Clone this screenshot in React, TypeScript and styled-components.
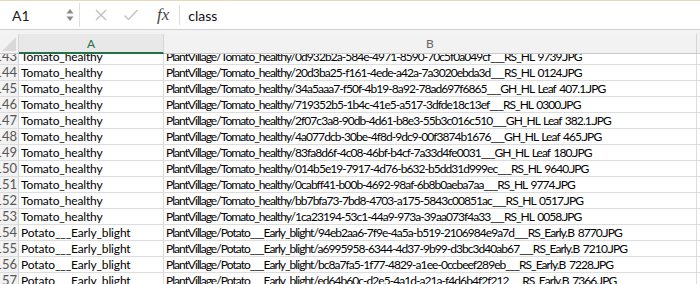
import styled, { createGlobalStyle } from 'styled-components';

const rows: [number, string, string][] = [
  [143, 'Tomato_healthy', 'PlantVillage/Tomato_healthy/0d932b2a-584e-4971-8590-70c5f0a049cf___RS_HL 9739.JPG'],
  [144, 'Tomato_healthy', 'PlantVillage/Tomato_healthy/20d3ba25-f161-4ede-a42a-7a3020ebda3d___RS_HL 0124.JPG'],
  [145, 'Tomato_healthy', 'PlantVillage/Tomato_healthy/34a5aaa7-f50f-4b19-8a92-78ad697f6865___GH_HL Leaf 407.1.JPG'],
  [146, 'Tomato_healthy', 'PlantVillage/Tomato_healthy/719352b5-1b4c-41e5-a517-3dfde18c13ef___RS_HL 0300.JPG'],
  [147, 'Tomato_healthy', 'PlantVillage/Tomato_healthy/2f07c3a8-90db-4d61-b8e3-55b3c016c510___GH_HL Leaf 382.1.JPG'],
  [148, 'Tomato_healthy', 'PlantVillage/Tomato_healthy/4a077dcb-30be-4f8d-9dc9-00f3874b1676___GH_HL Leaf 465.JPG'],
  [149, 'Tomato_healthy', 'PlantVillage/Tomato_healthy/83fa8d6f-4c08-46bf-b4cf-7a33d4fe0031___GH_HL Leaf 180.JPG'],
  [150, 'Tomato_healthy', 'PlantVillage/Tomato_healthy/014b5e19-7917-4d76-b632-b5dd31d999ec___RS_HL 9640.JPG'],
  [151, 'Tomato_healthy', 'PlantVillage/Tomato_healthy/0cabff41-b00b-4692-98af-6b8b0aeba7aa___RS_HL 9774.JPG'],
  [152, 'Tomato_healthy', 'PlantVillage/Tomato_healthy/bb7bfa73-7bd8-4703-a175-5843c00851ac___RS_HL 0517.JPG'],
  [153, 'Tomato_healthy', 'PlantVillage/Tomato_healthy/1ca23194-53c1-44a9-973a-39aa073f4a33___RS_HL 0058.JPG'],
  [154, 'Potato___Early_blight', 'PlantVillage/Potato___Early_blight/94eb2aa6-7f9e-4a5a-b519-2106984e9a7d___RS_Early.B 8770.JPG'],
  [155, 'Potato___Early_blight', 'PlantVillage/Potato___Early_blight/a6995958-6344-4d37-9b99-d3bc3d40ab67___RS_Early.B 7210.JPG'],
  [156, 'Potato___Early_blight', 'PlantVillage/Potato___Early_blight/bc8a7fa5-1f77-4829-a1ee-0ccbeef289eb___RS_Early.B 7228.JPG'],
  [157, 'Potato___Early_blight', 'PlantVillage/Potato___Early_blight/ed64b60c-d2e5-4a1d-a21a-f4d6b4f2f212___RS_Early.B 7366.JPG'],
];

function App() {
  return (
    <>
      <GlobalStyle />
      <Window>
        <FormulaBar>
          <NameBox>
            <span>A1</span>
            <Stepper>
              <svg width="8" height="14" viewBox="0 0 8 14">
                <path d="M4 1 L7.5 5.5 L0.5 5.5 Z" fill="#8a8a8a" />
                <path d="M4 13 L7.5 8.5 L0.5 8.5 Z" fill="#8a8a8a" />
              </svg>
            </Stepper>
          </NameBox>
          <Tools>
            <svg width="14" height="14" viewBox="0 0 14 14">
              <path d="M2 2 L12 12 M12 2 L2 12" stroke="#c4c4c4" strokeWidth="1.5" />
            </svg>
            <svg width="16" height="14" viewBox="0 0 16 14">
              <path d="M1.5 7.5 L5.5 11.5 L14.5 2" stroke="#c4c4c4" strokeWidth="1.5" fill="none" />
            </svg>
            <Fx>fx</Fx>
          </Tools>
          <FormulaText>class</FormulaText>
        </FormulaBar>
        <Gap />
        <Sheet>
          <HeaderRow>
            <Corner>
              <svg width="14" height="14" viewBox="0 0 14 14">
                <path d="M14 0 L14 14 L0 14 Z" fill="#d9d9d9" />
              </svg>
            </Corner>
            <ColHeader $width={145} $selected>A</ColHeader>
            <ColHeader $width={533}>B</ColHeader>
          </HeaderRow>
          <Body>
            {rows.map(([n, a, b], i) => (
              <Row key={n} $first={i === 0}>
                <RowNum>{n}</RowNum>
                <Cell $width={145} $tight={-0.15}>{a}</Cell>
                <Cell $width={533} $tight={-0.95}>{b}</Cell>
              </Row>
            ))}
          </Body>
        </Sheet>
      </Window>
    </>
  );
}

export default App;

const GlobalStyle = createGlobalStyle`
  html, body {
    margin: 0;
    padding: 0;
    background: #ffffff;
    overflow: hidden;
  }
`;

const Window = styled.div`
  width: 700px;
  height: 284px;
  overflow: hidden;
  display: flex;
  flex-direction: column;
  font-family: Lato, "Liberation Sans", sans-serif;
  border-top: 1px solid #e6d8b8;
  box-sizing: border-box;
`;

const FormulaBar = styled.div`
  height: 28px;
  display: flex;
  align-items: center;
  background: #ffffff;
  border-bottom: 1px solid #cfcfcf;
  flex-shrink: 0;
`;

const NameBox = styled.div`
  width: 80px;
  height: 24px;
  box-sizing: border-box;
  border-right: 1px solid #e0e0e0;
  display: flex;
  align-items: center;
  justify-content: space-between;
  padding: 0 5px 0 12px;
  font-size: 14px;
  color: #222;
`;

const Stepper = styled.div`
  display: flex;
  align-items: center;
`;

const Tools = styled.div`
  display: flex;
  align-items: center;
  gap: 15px;
  padding-left: 14px;
  padding-right: 10px;
  height: 20px;
  border-right: 1px solid #dcdcdc;
`;

const Fx = styled.span`
  font-family: "Liberation Serif", serif;
  font-style: italic;
  font-size: 17px;
  color: #444;
  padding-left: 3px;
`;

const FormulaText = styled.div`
  padding-left: 8px;
  font-size: 14px;
  color: #111;
`;

const Gap = styled.div`
  height: 4px;
  background: #f3f3f3;
  flex-shrink: 0;
`;

const Sheet = styled.div`
  flex: 1;
  min-height: 0;
  display: flex;
  flex-direction: column;
  overflow: hidden;
`;

const HeaderRow = styled.div`
  height: 19px;
  display: flex;
  background: #f2f2f2;
  border-bottom: 1px solid #c9c9c9;
  flex-shrink: 0;
`;

const Corner = styled.div`
  width: 19px;
  box-sizing: border-box;
  border-right: 1px solid #d4d4d4;
  display: flex;
  align-items: flex-end;
  justify-content: flex-end;
  padding: 0 2px 2px 0;
`;

const ColHeader = styled.div<{ $width: number; $selected?: boolean }>`
  width: ${({ $width }) => $width}px;
  box-sizing: border-box;
  border-right: 1px solid #d4d4d4;
  border-bottom: ${({ $selected }) => ($selected ? '2px solid #217346' : 'none')};
  margin-bottom: ${({ $selected }) => ($selected ? '-1px' : '0')};
  display: flex;
  align-items: center;
  justify-content: center;
  font-size: 12px;
  color: ${({ $selected }) => ($selected ? '#217346' : '#666')};
  background: ${({ $selected }) => ($selected ? '#e8e8e8' : 'transparent')};
`;

const Body = styled.div`
  flex: 1;
  min-height: 0;
  overflow: hidden;
  display: flex;
  flex-direction: column;
`;

const Row = styled.div<{ $first?: boolean }>`
  height: ${({ $first }) => ($first ? '11px' : '16px')};
  display: flex;
  flex-shrink: 0;
  border-bottom: 1px solid #dddddd;
  box-sizing: border-box;
  overflow: hidden;
`;

const RowNum = styled.div`
  width: 19px;
  box-sizing: border-box;
  background: #f2f2f2;
  border-right: 1px solid #d4d4d4;
  display: flex;
  align-items: flex-end;
  justify-content: flex-end;
  padding-right: 1px;
  font-size: 13px;
  line-height: 15px;
  color: #555;
  overflow: hidden;
  white-space: nowrap;
`;

const Cell = styled.div<{ $width: number; $tight: number }>`
  width: ${({ $width }) => $width}px;
  box-sizing: border-box;
  border-right: 1px solid #dddddd;
  padding-left: 2px;
  font-size: 12px;
  letter-spacing: ${({ $tight }) => $tight}px;
  word-spacing: 1.5px;
  line-height: 15px;
  color: #000;
  white-space: nowrap;
  overflow: hidden;
  display: flex;
  align-items: flex-end;
`;
